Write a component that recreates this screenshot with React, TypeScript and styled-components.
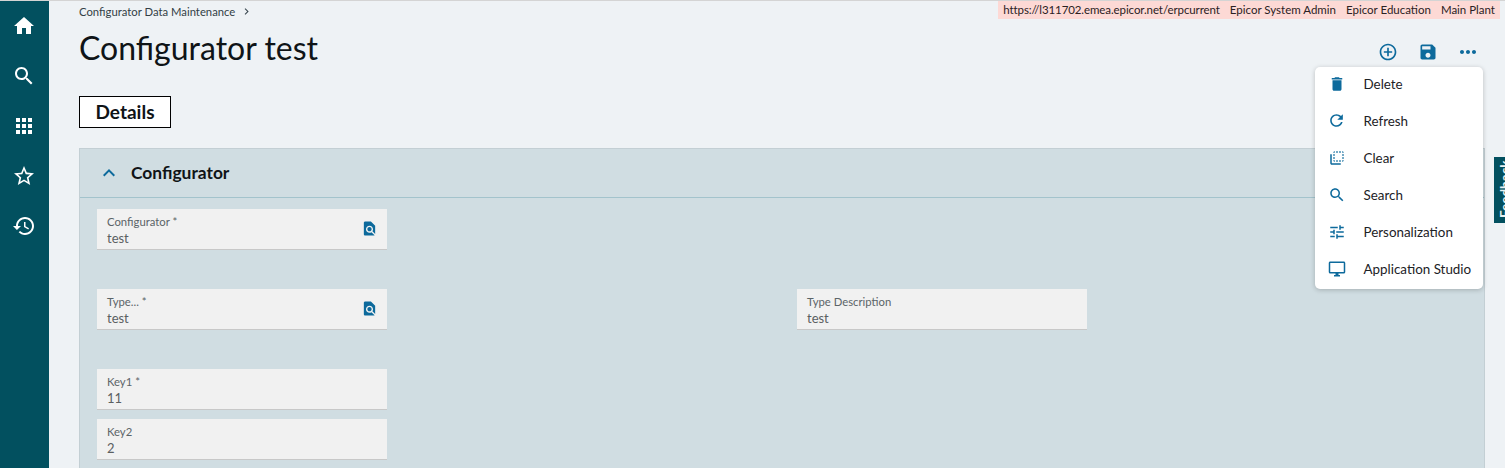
import React from "react";
import styled, { createGlobalStyle } from "styled-components";

const Global = createGlobalStyle`
  html, body { margin: 0; padding: 0; height: 100%; overflow: hidden; }
  body { font-family: "Lato", "Noto Sans", sans-serif; background: #eef2f5; }
  #root { height: 100%; }
`;

const Page = styled.div`
  position: relative;
  display: flex;
  height: 468px;
  width: 1505px;
  overflow: hidden;
  border-top: 1px solid #d4d4d4;
  box-sizing: border-box;
`;
const Sidebar = styled.nav`
  width: 49px;
  flex: none;
  background: #02505f;
  display: flex;
  flex-direction: column;
  align-items: center;
`;
const NavButton = styled.div`
  width: 48px;
  height: 50px;
  display: flex;
  align-items: center;
  justify-content: center;
  margin-right: 1px;
`;
const Main = styled.main`
  flex: 1;
  min-width: 0;
  padding: 4px 20px 0 30px;
  display: flex;
  flex-direction: column;
`;
const Breadcrumb = styled.div`
  flex: none;
  font-size: 11.3px;
  line-height: 14px;
  color: #333f46;
  display: flex;
  gap: 5px;
  height: 14px;
`;
const TitleRow = styled.div`
  flex: none;
  display: flex;
  justify-content: space-between;
  align-items: flex-start;
  height: 77px;
`;
const Title = styled.h1`
  margin: 8px 0 0;
  font-size: 32px;
  line-height: 42px;
  font-weight: 400;
  color: #0f1417;
`;
const Actions = styled.div`
  display: flex;
  gap: 16px;
  margin: 21px 5px 0 0;
`;
const ActionSlot = styled.span`
  width: 24px;
  height: 24px;
  display: flex;
  align-items: center;
  justify-content: center;
`;
const DetailsTab = styled.div`
  flex: none;
  align-self: flex-start;
  width: 90px;
  height: 30px;
  border: 1px solid #000;
  background: #fff;
  font-size: 19px;
  font-weight: 700;
  line-height: 30px;
  text-align: center;
  color: #0f1417;
`;
const Panel = styled.section`
  flex: none;
  height: 420px;
  margin-top: 20px;
  background: #d0dde2;
  border: 1px solid #c3cfd4;
`;
const PanelHeader = styled.header`
  height: 47px;
  display: flex;
  align-items: center;
  gap: 10px;
  padding: 0 0 1px 17px;
  border-bottom: 1px solid #a3c3cc;
  font-size: 17.4px;
  font-weight: 700;
  color: #0f1417;
`;
const FieldGrid = styled.div`
  display: grid;
  grid-template-columns: 700px 290px;
  grid-template-rows: 41px 41px 41px 41px;
  row-gap: 39px;
  padding: 11px 0 0 17px;
`;
const Field = styled.div<{ $col?: number; $row: number; $shift?: number }>`
  grid-column: ${(p) => p.$col ?? 1};
  grid-row: ${(p) => p.$row};
  margin-top: ${(p) => p.$shift ?? 0}px;
  width: 290px;
  height: 41px;
  box-sizing: border-box;
  background: #f1f1f1;
  border-bottom: 1px solid #c8c8c8;
  padding: 6px 10px 0;
  position: relative;
`;
const FieldLabel = styled.div`
  font-size: 11.3px;
  line-height: 14px;
  color: #5b6468;
`;
const FieldValue = styled.div`
  margin-top: 1px;
  font-size: 13px;
  line-height: 17px;
  color: #5b5f62;
`;
const LookupIcon = styled.span`
  position: absolute;
  right: 9px;
  top: 11px;
  display: flex;
`;
const InfoBar = styled.div`
  position: absolute;
  top: 0;
  right: 5px;
  height: 18px;
  background: #fdd9d5;
  display: flex;
  gap: 10px;
  padding: 0 5px;
  font-size: 11.5px;
  line-height: 18px;
  color: #2b2124;
`;
const UrlText = styled.span`
  letter-spacing: -0.09px;
`;
const Menu = styled.div`
  position: absolute;
  left: 1315px;
  top: 66px;
  width: 168px;
  height: 222px;
  background: #fff;
  border-radius: 5px;
  box-shadow: 0 1px 5px rgba(0, 0, 0, 0.22);
  display: flex;
  flex-direction: column;
`;
const MenuItem = styled.div`
  height: 37px;
  box-sizing: border-box;
  padding-bottom: 4px;
  display: flex;
  align-items: center;
  font-size: 13.4px;
  color: #1c2226;
`;
const MenuIcon = styled.span`
  width: 48.5px;
  flex: none;
  display: flex;
  justify-content: center;
  padding-right: 5px;
  box-sizing: border-box;
`;
const Feedback = styled.div`
  position: absolute;
  left: 1494px;
  top: 156px;
  width: 11px;
  height: 66px;
  background: #02505f;
  overflow: hidden;
`;
const FeedbackText = styled.span`
  position: absolute;
  left: 4px;
  top: 2px;
  writing-mode: vertical-rl;
  transform: rotate(180deg);
  height: 59px;
  font-size: 13.5px;
  font-weight: 700;
  line-height: 14px;
  color: #e8f1f3;
  white-space: nowrap;
`;

const Icon = ({ d, size = 24, color = "#0d6a9c" }: { d: string; size?: number; color?: string }) => (
  <svg width={size} height={size} viewBox="0 0 24 24" fill={color} aria-hidden="true">
    <path d={d} />
  </svg>
);

const P = {
  home: "M10 20v-6h4v6h5v-8h3L12 3 2 12h3v8z",
  search:
    "M15.5 14h-.79l-.28-.27C15.41 12.59 16 11.11 16 9.5 16 5.91 13.09 3 9.5 3S3 5.91 3 9.5 5.91 16 9.5 16c1.61 0 3.09-.59 4.23-1.57l.27.28v.79l5 4.99L20.49 19l-4.99-5zm-6 0C7.01 14 5 11.99 5 9.5S7.01 5 9.5 5 14 7.01 14 9.5 11.99 14 9.5 14z",
  apps: "M4 8h4V4H4v4zm6 12h4v-4h-4v4zm-6 0h4v-4H4v4zm0-6h4v-4H4v4zm6 0h4v-4h-4v4zm6-10v4h4V4h-4zm-6 4h4V4h-4v4zm6 6h4v-4h-4v4zm0 6h4v-4h-4v4z",
  star: "M22 9.24l-7.19-.62L12 2 9.19 8.63 2 9.24l5.46 4.73L5.82 21 12 17.27 18.18 21l-1.63-7.03L22 9.24zM12 15.4l-3.76 2.27 1-4.28-3.32-2.88 4.38-.38L12 6.1l1.71 4.04 4.38.38-3.32 2.88 1 4.28L12 15.4z",
  history:
    "M13 3c-4.97 0-9 4.03-9 9H1l3.89 3.89.07.14L9 12H6c0-3.87 3.13-7 7-7s7 3.13 7 7-3.13 7-7 7c-1.93 0-3.68-.79-4.94-2.06l-1.42 1.42C8.27 19.99 10.51 21 13 21c4.97 0 9-4.03 9-9s-4.03-9-9-9zm-1 5v5l4.28 2.54.72-1.21-3.5-2.08V8H12z",
  add: "M13 7h-2v4H7v2h4v4h2v-4h4v-2h-4V7zm-1-5C6.48 2 2 6.48 2 12s4.48 10 10 10 10-4.48 10-10S17.52 2 12 2zm0 18c-4.41 0-8-3.59-8-8s3.59-8 8-8 8 3.59 8 8-3.59 8-8 8z",
  save: "M17 3H5c-1.11 0-2 .9-2 2v14c0 1.1.89 2 2 2h14c1.1 0 2-.9 2-2V7l-4-4zm-5 16c-1.66 0-3-1.34-3-3s1.34-3 3-3 3 1.34 3 3-1.34 3-3 3zm3-10H5V5h10v4z",
  more: "M6 10c-1.1 0-2 .9-2 2s.9 2 2 2 2-.9 2-2-.9-2-2-2zm12 0c-1.1 0-2 .9-2 2s.9 2 2 2 2-.9 2-2-.9-2-2-2zm-6 0c-1.1 0-2 .9-2 2s.9 2 2 2 2-.9 2-2-.9-2-2-2z",
  del: "M6 19c0 1.1.9 2 2 2h8c1.1 0 2-.9 2-2V7H6v12zM19 4h-3.5l-1-1h-5l-1 1H5v2h14V4z",
  refresh:
    "M17.65 6.35C16.2 4.9 14.21 4 12 4c-4.42 0-7.99 3.58-7.99 8s3.57 8 7.99 8c3.73 0 6.84-2.55 7.73-6h-2.08c-.82 2.33-3.04 4-5.65 4-3.31 0-6-2.69-6-6s2.69-6 6-6c1.66 0 3.14.69 4.22 1.78L13 11h7V4l-2.35 2.35z",
  clear:
    "M9 7H7v2h2V7zm0 4H7v2h2v-2zm0-8c-1.11 0-2 .9-2 2h2V3zm4 12h-2v2h2v-2zm6-12v2h2c0-1.1-.9-2-2-2zm-6 0h-2v2h2V3zM9 17v-2H7c0 1.1.89 2 2 2zm10-4h2v-2h-2v2zm0-4h2V7h-2v2zm0 8c1.1 0 2-.9 2-2h-2v2zM5 7H3v12c0 1.1.89 2 2 2h12v-2H5V7zm10-2h2V3h-2v2zm0 12h2v-2h-2v2z",
  tune: "M3 17v2h6v-2H3zM3 5v2h10V5H3zm10 16v-2h8v-2h-8v-2h-2v6h2zM7 9v2H3v2h4v2h2V9H7zm14 4v-2H11v2h10zm-6-4h2V7h4V5h-4V3h-2v6z",
  desktop:
    "M21 2H3c-1.1 0-2 .9-2 2v12c0 1.1.9 2 2 2h7v2H8v2h8v-2h-2v-2h7c1.1 0 2-.9 2-2V4c0-1.1-.9-2-2-2zm0 14H3V4h18v12z",
  find: "M20 19.59V8l-6-6H6c-1.1 0-1.99.9-1.99 2L4 20c0 1.1.89 2 1.99 2H18c.45 0 .85-.15 1.19-.4l-4.43-4.43c-.8.52-1.74.83-2.76.83-2.76 0-5-2.24-5-5s2.24-5 5-5 5 2.24 5 5c0 1.02-.31 1.96-.83 2.75L20 19.59zM9 13c0 1.66 1.34 3 3 3s3-1.34 3-3-1.34-3-3-3-3 1.34-3 3z",
  up: "M7.41 15.41L12 10.83l4.59 4.58L18 14l-6-6-6 6z",
  chevron: "M10 6L8.59 7.41 13.17 12l-4.58 4.59L10 18l6-6z",
};

const menuItems: { label: string; d: string; size: number }[] = [
  { label: "Delete", d: P.del, size: 18 },
  { label: "Refresh", d: P.refresh, size: 19 },
  { label: "Clear", d: P.clear, size: 18 },
  { label: "Search", d: P.search, size: 18 },
  { label: "Personalization", d: P.tune, size: 18 },
  { label: "Application Studio", d: P.desktop, size: 18 },
];

const navItems = [P.home, P.search, P.apps, P.star, P.history];

const Lookup = () => (
  <LookupIcon>
    <Icon d={P.find} size={17} />
  </LookupIcon>
);

export default function App() {
  return (
    <>
      <Global />
      <Page>
        <Sidebar>
          {navItems.map((d) => (
            <NavButton key={d}>
              <Icon d={d} color="#fff" />
            </NavButton>
          ))}
        </Sidebar>
        <Main>
          <Breadcrumb>
            <span>Configurator Data Maintenance</span>
            <Icon d={P.chevron} size={13} color="#3c4a52" />
          </Breadcrumb>
          <TitleRow>
            <Title>Configurator test</Title>
            <Actions>
              <ActionSlot>
                <Icon d={P.add} size={20} />
              </ActionSlot>
              <ActionSlot>
                <Icon d={P.save} size={20} />
              </ActionSlot>
              <ActionSlot>
                <Icon d={P.more} size={24} />
              </ActionSlot>
            </Actions>
          </TitleRow>
          <DetailsTab>Details</DetailsTab>
          <Panel>
            <PanelHeader>
              <Icon d={P.up} />
              Configurator
            </PanelHeader>
            <FieldGrid>
              <Field $row={1}>
                <FieldLabel>Configurator *</FieldLabel>
                <FieldValue>test</FieldValue>
                <Lookup />
              </Field>
              <Field $row={2}>
                <FieldLabel>Type... *</FieldLabel>
                <FieldValue>test</FieldValue>
                <Lookup />
              </Field>
              <Field $row={2} $col={2}>
                <FieldLabel>Type Description</FieldLabel>
                <FieldValue>test</FieldValue>
              </Field>
              <Field $row={3}>
                <FieldLabel>Key1 *</FieldLabel>
                <FieldValue>11</FieldValue>
              </Field>
              <Field $row={4} $shift={-30}>
                <FieldLabel>Key2</FieldLabel>
                <FieldValue>2</FieldValue>
              </Field>
            </FieldGrid>
          </Panel>
        </Main>
        <InfoBar>
          <UrlText>https://l311702.emea.epicor.net/erpcurrent</UrlText>
          <span>Epicor System Admin</span>
          <span>Epicor Education</span>
          <span>Main Plant</span>
        </InfoBar>
        <Menu>
          {menuItems.map((m) => (
            <MenuItem key={m.label}>
              <MenuIcon>
                <Icon d={m.d} size={m.size} />
              </MenuIcon>
              {m.label}
            </MenuItem>
          ))}
        </Menu>
        <Feedback>
          <FeedbackText>Feedback</FeedbackText>
        </Feedback>
      </Page>
    </>
  );
}
